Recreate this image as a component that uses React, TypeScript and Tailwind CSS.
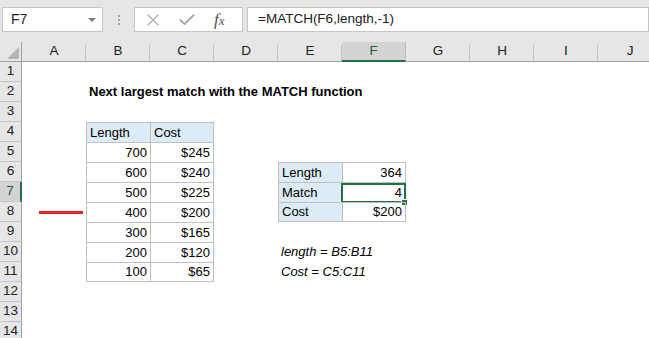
import React from 'react';
import { X, Check } from 'lucide-react';

type Cell = { v: string; right?: boolean; bold?: boolean; italic?: boolean };

const COLS = ['A', 'B', 'C', 'D', 'E', 'F', 'G', 'H', 'I', 'J'];
const ROWS = [1, 2, 3, 4, 5, 6, 7, 8, 9, 10, 11, 12, 13, 14];

const data: Record<string, Cell> = {
    B2: { v: 'Next largest match with the MATCH function', bold: true },
    B4: { v: 'Length' },
    C4: { v: 'Cost' },
    B5: { v: '700', right: true },
    C5: { v: '$245', right: true },
    B6: { v: '600', right: true },
    C6: { v: '$240', right: true },
    B7: { v: '500', right: true },
    C7: { v: '$225', right: true },
    B8: { v: '400', right: true },
    C8: { v: '$200', right: true },
    B9: { v: '300', right: true },
    C9: { v: '$165', right: true },
    B10: { v: '200', right: true },
    C10: { v: '$120', right: true },
    B11: { v: '100', right: true },
    C11: { v: '$65', right: true },
    E6: { v: 'Length' },
    F6: { v: '364', right: true },
    E7: { v: 'Match' },
    F7: { v: '4', right: true },
    E8: { v: 'Cost' },
    F8: { v: '$200', right: true },
    E10: { v: 'length = B5:B11', italic: true },
    E11: { v: 'Cost = C5:C11', italic: true },
};

const headFill = ['B4', 'C4', 'E6', 'E7', 'E8'];

function tableInfo(col: string, row: number) {
    const c = COLS.indexOf(col);
    if (c >= 1 && c <= 2 && row >= 4 && row <= 11) {
        return { left: c === 1, right: c === 2, top: row === 4, bottom: row === 11 };
    }
    if (c >= 4 && c <= 5 && row >= 6 && row <= 8) {
        return { left: c === 4, right: c === 5, top: row === 6, bottom: row === 8 };
    }
    return null;
}

const SheetCell = ({ col, row }: { col: string; row: number }) => {
    const id = col + row;
    const cell = data[id];
    const t = tableInfo(col, row);
    let cls = 'relative h-[20px] flex items-center px-[3px] text-[13px] text-black';
    if (t) {
        cls += ' border-[#bfbfbf] border-l border-t';
        if (t.right) cls += ' border-r';
        if (t.bottom) cls += ' border-b';
    }
    if (headFill.includes(id)) cls += ' bg-[#ddebf7]';
    if (cell?.right) cls += ' justify-end';
    return (
        <div className={cls}>
            {id === 'A8' && (
                <div className="ml-[14px] w-[44px] h-[3px] bg-[#e3262d]" />
            )}
            {cell && (
                <span
                    className={
                        'whitespace-nowrap' +
                        (cell.bold ? ' font-bold' : '') +
                        (cell.italic ? ' italic' : '')
                    }
                >
                    {cell.v}
                </span>
            )}
            {id === 'F7' && (
                <>
                    <div className="absolute -left-[2px] top-0 -right-[1px] -bottom-[1px] border-2 border-[#217346]" />
                    <div className="absolute -right-[3px] -bottom-[4px] w-[7px] h-[7px] bg-[#217346] border border-white" />
                </>
            )}
        </div>
    );
};

const App = () => {
    return (
        <div className="w-[649px] h-[338px] overflow-hidden bg-white font-['Liberation_Sans',Arial,sans-serif]">
            {/* formula bar */}
            <div className="h-[42px] bg-[#e6e6e6] flex items-start pt-[7px] pl-[2px]">
                <div className="w-[101px] h-[25px] bg-white border border-[#c6c6c6] flex items-center justify-between pl-[8px] pr-[6px]">
                    <span className="text-[14px] text-[#222]">F7</span>
                    <div className="w-0 h-0 border-l-[4px] border-r-[4px] border-t-[4px] border-l-transparent border-r-transparent border-t-[#7a7a7a]" />
                </div>
                <div className="w-[31px] h-[25px] flex flex-col items-center justify-center gap-[2px]">
                    <div className="w-[2px] h-[2px] bg-[#a0a0a0]" />
                    <div className="w-[2px] h-[2px] bg-[#a0a0a0]" />
                    <div className="w-[2px] h-[2px] bg-[#a0a0a0]" />
                </div>
                <div className="w-[109px] h-[25px] bg-white border border-[#c6c6c6] flex items-center pl-[8px]">
                    <X size={20} strokeWidth={1.3} className="text-[#a8a8a8]" />
                    <Check size={20} strokeWidth={2.2} className="text-[#a8a8a8] ml-[14px]" />
                    <span className="ml-[17px] font-['Liberation_Serif',serif] italic text-[17px] leading-none text-[#555]">
                        f<span className="text-[13px]">x</span>
                    </span>
                </div>
                <div className="flex-1 ml-[4px] h-[25px] bg-white border border-[#c6c6c6] flex items-center pl-[10px]">
                    <span className="text-[13.5px] text-[#222]">=MATCH(F6,length,-1)</span>
                </div>
            </div>

            {/* sheet */}
            <div className="grid grid-cols-[22px_repeat(10,64px)]">
                <div className="h-[20px] bg-[#e6e6e6] border-b border-r border-[#9f9f9f] relative">
                    <svg className="absolute left-[7px] top-[5px]" width="12" height="12" viewBox="0 0 12 12">
                        <polygon points="12,0 12,12 0,12" fill="#b5b5b5" />
                    </svg>
                </div>
                {COLS.map((c) => (
                    <div
                        key={c}
                        className={
                            c === 'F'
                                ? 'h-[20px] bg-[#d3d3d3] border-b-2 border-[#217346] border-r border-r-[#bdbdbd] flex items-center justify-center text-[13.5px] text-[#225a3a]'
                                : 'h-[20px] bg-[#e6e6e6] border-b border-[#9f9f9f] flex items-center justify-center text-[13.5px] text-[#222] relative'
                        }
                    >
                        {c}
                        {c !== 'F' && (
                            <div className="absolute right-0 top-[3px] bottom-0 w-px bg-[#c4c4c4]" />
                        )}
                    </div>
                ))}
                {ROWS.map((r) => (
                    <React.Fragment key={r}>
                        <div
                            className={
                                r === 7
                                    ? 'h-[20px] bg-[#d3d3d3] border-r-2 border-r-[#217346] border-b border-b-[#c4c4c4] flex items-center justify-center text-[13.5px] text-[#225a3a]'
                                    : 'h-[20px] bg-[#e6e6e6] border-r border-r-[#9f9f9f] border-b border-b-[#c4c4c4] flex items-center justify-center text-[13.5px] text-[#222]'
                            }
                        >
                            {r}
                        </div>
                        {COLS.map((c) => (
                            <SheetCell key={c + r} col={c} row={r} />
                        ))}
                    </React.Fragment>
                ))}
            </div>
        </div>
    );
};

export default App;
